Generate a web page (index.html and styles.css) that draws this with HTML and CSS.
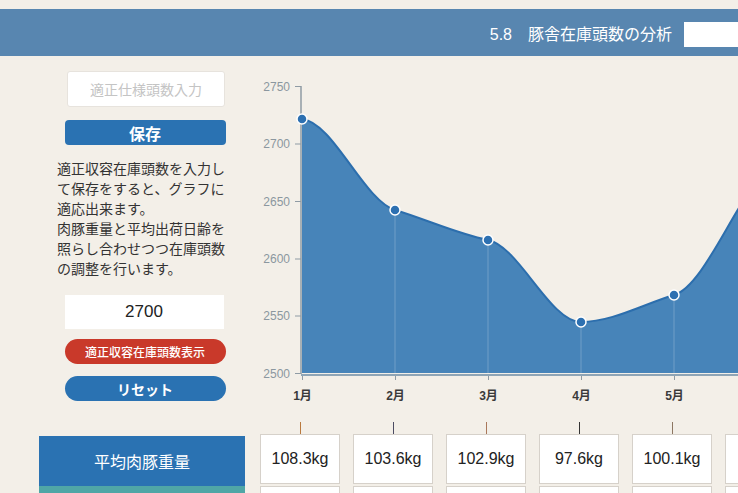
FILE: index.html
```html
<!DOCTYPE html>
<html lang="ja">
<head>
<meta charset="utf-8">
<title>豚舎在庫頭数の分析</title>
<link rel="stylesheet" href="styles.css">
</head>
<body>
  <header class="topbar">
    <h1 class="title">5.8　豚舎在庫頭数の分析</h1>
    <div class="title-box"></div>
  </header>

  <main class="main">
    <section class="panel">
      <input class="spec-input" type="text" placeholder="適正仕様頭数入力">
      <button class="btn btn-save">保存</button>
      <p class="note">適正収容在庫頭数を入力して保存をすると、グラフに適応出来ます。<br>肉豚重量と平均出荷日齢を照らし合わせつつ在庫頭数の調整を行います。</p>
      <div class="value-box">2700</div>
      <button class="btn btn-pill btn-red">適正収容在庫頭数表示</button>
      <button class="btn btn-pill btn-blue">リセット</button>
    </section>

    <svg class="chart" width="488" height="339" viewBox="250 71 488 339">
      <!-- area under the stock curve -->
      <path class="area" d="M302,373 L302,119 C333,122.1 364,200.7 395,210 C426,219.3 457,233.8 488,240 C519,246.2 550,322 581,322 C612,322 643,304.3 674,295 C705,285.7 736,197.9 767,170 L767,373 Z"/>
      <!-- drop lines from each point -->
      <g class="drops">
        <line x1="395" y1="210" x2="395" y2="373"/>
        <line x1="488" y1="240" x2="488" y2="373"/>
        <line x1="581" y1="322" x2="581" y2="373"/>
        <line x1="674" y1="295" x2="674" y2="373"/>
      </g>
      <path class="line" d="M302,119 C333,122.1 364,200.7 395,210 C426,219.3 457,233.8 488,240 C519,246.2 550,322 581,322 C612,322 643,304.3 674,295 C705,285.7 736,197.9 767,170"/>

      <!-- y axis -->
      <g class="axis-y">
        <line class="axis-line" x1="301" y1="86" x2="301" y2="374"/>
        <line x1="295" y1="86.5" x2="301" y2="86.5"/>
        <line x1="295" y1="144" x2="301" y2="144"/>
        <line x1="295" y1="201.5" x2="301" y2="201.5"/>
        <line x1="295" y1="259" x2="301" y2="259"/>
        <line x1="295" y1="316" x2="301" y2="316"/>
        <line x1="295" y1="373.5" x2="301" y2="373.5"/>
        <text x="290" y="90.5">2750</text>
        <text x="290" y="148">2700</text>
        <text x="290" y="205.5">2650</text>
        <text x="290" y="263">2600</text>
        <text x="290" y="320">2550</text>
        <text x="290" y="377.5">2500</text>
      </g>

      <!-- x axis -->
      <g class="axis-x">
        <line class="axis-line" x1="301" y1="375" x2="738" y2="375"/>
        <line x1="302.5" y1="376" x2="302.5" y2="380"/>
        <line x1="395.5" y1="376" x2="395.5" y2="380"/>
        <line x1="488.5" y1="376" x2="488.5" y2="380"/>
        <line x1="581.5" y1="376" x2="581.5" y2="380"/>
        <line x1="674.5" y1="376" x2="674.5" y2="380"/>
        <text x="302.5" y="400">1月</text>
        <text x="395.5" y="400">2月</text>
        <text x="488.5" y="400">3月</text>
        <text x="581.5" y="400">4月</text>
        <text x="674.5" y="400">5月</text>
      </g>

      <!-- data points -->
      <g class="dots">
        <circle cx="302" cy="119" r="5"/>
        <circle cx="395" cy="210" r="5"/>
        <circle cx="488" cy="240" r="5"/>
        <circle cx="581" cy="322" r="5"/>
        <circle cx="674" cy="295" r="5"/>
      </g>
    </svg>
  </main>

  <section class="stats">
    <div class="stat-label">
      <div class="stat-label-top">平均肉豚重量</div>
      <div class="stat-label-bottom"></div>
    </div>
    <div class="stat-cols">
      <div class="stat-col">
        <span class="stat-tick tick-1"></span>
        <div class="stat-cell">108.3kg</div>
        <div class="stat-cell stat-cell-sub"></div>
      </div>
      <div class="stat-col">
        <span class="stat-tick tick-2"></span>
        <div class="stat-cell">103.6kg</div>
        <div class="stat-cell stat-cell-sub"></div>
      </div>
      <div class="stat-col">
        <span class="stat-tick tick-3"></span>
        <div class="stat-cell">102.9kg</div>
        <div class="stat-cell stat-cell-sub"></div>
      </div>
      <div class="stat-col">
        <span class="stat-tick tick-4"></span>
        <div class="stat-cell">97.6kg</div>
        <div class="stat-cell stat-cell-sub"></div>
      </div>
      <div class="stat-col">
        <span class="stat-tick tick-5"></span>
        <div class="stat-cell">100.1kg</div>
        <div class="stat-cell stat-cell-sub"></div>
      </div>
      <div class="stat-col">
        <span class="stat-tick tick-6"></span>
        <div class="stat-cell"></div>
        <div class="stat-cell stat-cell-sub"></div>
      </div>
    </div>
  </section>
</body>
</html>
```

FILE: styles.css
```css
html, body {
  margin: 0;
  padding: 0;
}

body {
  width: 738px;
  height: 493px;
  overflow: hidden;
  background: #f3efe8;
  font-family: "Liberation Sans", "Noto Sans CJK JP", sans-serif;
  color: #333;
}

/* title bar */
.topbar {
  margin-top: 9px;
  height: 47px;
  background: #5886b0;
  display: flex;
  align-items: center;
  justify-content: flex-end;
  gap: 12px;
}

.title {
  margin: 0;
  font-size: 16px;
  font-weight: normal;
  color: #fff;
  font-family: "Liberation Sans", "Noto Sans CJK JP", sans-serif;
}

.title-box {
  width: 54px;
  height: 25px;
  margin-top: 4px;
  background: #fff;
}

/* main area: controls + chart */
.main {
  display: flex;
  padding-top: 15px;
  height: 339px;
  overflow: hidden;
}

.panel {
  margin-left: 57px;
  width: 176px;
  flex: none;
  display: flex;
  flex-direction: column;
  align-items: center;
}

.spec-input {
  box-sizing: border-box;
  width: 158px;
  height: 36px;
  margin: 0 0 0 2px;
  padding: 0;
  border: 1px solid #e7e3dd;
  border-radius: 3px;
  background: #fff;
  text-align: center;
  font-family: "Noto Sans CJK JP", sans-serif;
  font-size: 14px;
  color: #333;
  outline: none;
}

.spec-input::placeholder {
  color: #c4c4c4;
}

.btn {
  box-sizing: border-box;
  width: 161px;
  height: 25px;
  margin: 0;
  padding: 0;
  border: none;
  color: #fff;
  font-family: "Noto Sans CJK JP", sans-serif;
  cursor: pointer;
}

.btn-save {
  margin-top: 13px;
  border-radius: 4px;
  background: #2a72b2;
  font-size: 16px;
  font-weight: bold;
}

.note {
  align-self: stretch;
  margin: 13px 0 0;
  font-family: "Noto Sans CJK JP", sans-serif;
  font-size: 14px;
  line-height: 20px;
  color: #333;
}

.value-box {
  width: 159px;
  height: 34px;
  margin-top: 17px;
  margin-right: 2px;
  background: #fff;
  font-size: 17px;
  line-height: 34px;
  text-align: center;
  color: #222;
}

.btn-pill {
  border-radius: 13px;
}

.btn-red {
  margin-top: 10px;
  background: #c9392a;
  font-size: 12px;
  font-weight: 500;
}

.btn-blue {
  margin-top: 12px;
  background: #2a72b2;
  font-size: 14px;
  font-weight: bold;
}

/* chart */
.chart {
  display: block;
  margin-left: 17px;
  flex: none;
}

.area {
  fill: #4784b9;
}

.line {
  fill: none;
  stroke: #2c6ead;
  stroke-width: 2;
}

.drops line {
  stroke: rgba(255, 255, 255, 0.22);
  stroke-width: 1;
}

.axis-y line {
  stroke: #8f9ba4;
  stroke-width: 1;
}

.axis-y .axis-line {
  stroke-width: 1.5;
}

.axis-y text {
  font-family: "Liberation Sans", sans-serif;
  font-size: 12px;
  fill: #8b979f;
  text-anchor: end;
}

.axis-x line {
  stroke: #8f9ba4;
  stroke-width: 1;
}

.axis-x .axis-line {
  stroke: #8fa5b6;
  stroke-width: 2;
}

.axis-x text {
  font-family: "Liberation Sans", "Noto Sans CJK JP", sans-serif;
  font-size: 12px;
  font-weight: bold;
  fill: #3a3a3a;
  text-anchor: middle;
}

.dots circle {
  fill: #2d70b1;
  stroke: #fff;
  stroke-width: 1.5;
}

/* monthly weight row */
.stats {
  display: flex;
  margin-top: 12px;
  margin-left: 39px;
  overflow: hidden;
}

.stat-label {
  width: 206px;
  flex: none;
  margin-top: 14px;
  display: flex;
  flex-direction: column;
}

.stat-label-top {
  height: 50px;
  background: #2a72b2;
  color: #fff;
  font-family: "Noto Sans CJK JP", sans-serif;
  font-size: 16px;
  line-height: 50px;
  text-align: center;
}

.stat-label-bottom {
  height: 20px;
  background: #4fa6a6;
}

.stat-cols {
  display: flex;
  flex: none;
  gap: 13px;
  margin-left: 15px;
}

.stat-col {
  width: 80px;
  flex: none;
  display: flex;
  flex-direction: column;
  align-items: center;
}

.stat-tick {
  display: block;
  width: 1px;
  height: 12px;
}

.tick-1 { background: #b9793f; }
.tick-2 { background: #4b4b62; }
.tick-3 { background: #a9775a; }
.tick-4 { background: #333; }
.tick-5 { background: #8c7662; }
.tick-6 { background: #777; }

.stat-cell {
  box-sizing: border-box;
  width: 80px;
  height: 50px;
  border: 1px solid #d6d1ca;
  background: #fff;
  font-family: "Liberation Sans", sans-serif;
  font-size: 16px;
  line-height: 48px;
  text-align: center;
  color: #222;
}

.stat-cell-sub {
  margin-top: 2px;
  height: 30px;
}
```
